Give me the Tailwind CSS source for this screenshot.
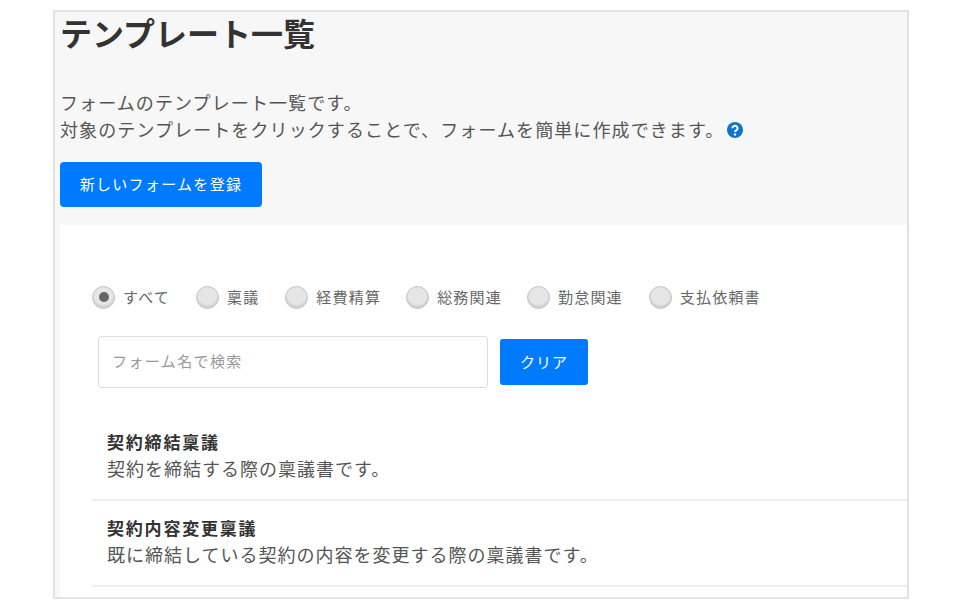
<!DOCTYPE html>
<html lang="ja">

<head>
  <meta charset="utf-8">
  <script src="https://cdn.jsdelivr.net/npm/@tailwindcss/browser@4"></script>
  <title>テンプレート一覧</title>
</head>

<body class="bg-white h-[611px] overflow-hidden font-['Noto_Sans_CJK_JP','Noto_Sans',sans-serif] text-[#555]">
  <div class="ml-[53px] mt-[10px] w-[856px] h-[589px] border-2 border-[#e2e2e2] bg-[#f7f7f7] overflow-hidden pl-[5px]">
    <h1 class="text-[32px] leading-[40px] font-bold text-[#333]">テンプレート一覧</h1>

    <p class="mt-[37px] text-[18px] leading-[27px] tracking-[1.1px]">フォームのテンプレート一覧です。<br>
      <span class="inline-flex items-center">対象のテンプレートをクリックすることで、フォームを簡単に作成できます。
        <svg class="w-[16px] h-[16px] ml-[3px]" viewBox="0 0 16 16">
          <circle cx="8" cy="8" r="8" fill="#0d74cf" />
          <path d="M5.4 6.2a2.6 2.4 0 1 1 4 2c-.9.6-1.4 1-1.4 1.9" fill="none" stroke="#fff" stroke-width="2" />
          <circle cx="8" cy="12.5" r="1.2" fill="#fff" />
        </svg>
      </span>
    </p>

    <button class="mt-[19px] block w-[202px] h-[45px] rounded-[4px] bg-[#007bff] text-white text-[15px] tracking-[1.3px]">新しいフォームを登録</button>

    <div class="mt-[18px] bg-white h-[400px] pl-[32px] pt-[59px]">
      <div class="flex items-center h-[26px] text-[15px] tracking-[1.2px] text-[#666]">
        <label class="flex items-center mr-[26px]">
          <span class="flex items-center justify-center w-[23px] h-[23px] rounded-full bg-[#e6e6e6] border border-[#c4c4c4] shadow-[inset_0_-2px_2px_#ccc] mr-[8px]">
            <span class="w-[10px] h-[10px] rounded-full bg-[#666]"></span>
          </span>すべて
        </label>
        <label class="flex items-center mr-[26px]"><span class="w-[23px] h-[23px] rounded-full bg-[#e6e6e6] border border-[#c4c4c4] shadow-[inset_0_-2px_2px_#ccc] mr-[8px]"></span>稟議</label>
        <label class="flex items-center mr-[25px]"><span class="w-[23px] h-[23px] rounded-full bg-[#e6e6e6] border border-[#c4c4c4] shadow-[inset_0_-2px_2px_#ccc] mr-[8px]"></span>経費精算</label>
        <label class="flex items-center mr-[25px]"><span class="w-[23px] h-[23px] rounded-full bg-[#e6e6e6] border border-[#c4c4c4] shadow-[inset_0_-2px_2px_#ccc] mr-[8px]"></span>総務関連</label>
        <label class="flex items-center mr-[26px]"><span class="w-[23px] h-[23px] rounded-full bg-[#e6e6e6] border border-[#c4c4c4] shadow-[inset_0_-2px_2px_#ccc] mr-[8px]"></span>勤怠関連</label>
        <label class="flex items-center"><span class="w-[23px] h-[23px] rounded-full bg-[#e6e6e6] border border-[#c4c4c4] shadow-[inset_0_-2px_2px_#ccc] mr-[8px]"></span>支払依頼書</label>
      </div>

      <div class="flex items-center mt-[26px] ml-[6px]">
        <input type="text" placeholder="フォーム名で検索"
          class="w-[390px] h-[52px] px-[13px] pb-[3px] rounded-[3px] border border-[#ddd] bg-white text-[15px] tracking-[1.4px] placeholder:text-[#999] outline-none">
        <button class="ml-[12px] w-[88px] h-[46px] rounded-[3px] bg-[#007bff] text-white text-[15px] tracking-[1px]">クリア</button>
      </div>

      <div class="mt-[29px]">
        <div class="h-[84px] pl-[15px] pt-[12px] border-b-2 border-[#eee]">
          <h2 class="text-[17px] leading-[26px] font-bold text-[#333] tracking-[1.8px]">契約締結稟議</h2>
          <p class="text-[18px] leading-[27px] tracking-[1px]">契約を締結する際の稟議書です。</p>
        </div>
        <div class="h-[86px] pl-[15px] pt-[14px] border-b-2 border-[#eee]">
          <h2 class="text-[17px] leading-[26px] font-bold text-[#333] tracking-[1.8px]">契約内容変更稟議</h2>
          <p class="text-[18px] leading-[27px] tracking-[1px]">既に締結している契約の内容を変更する際の稟議書です。</p>
        </div>
      </div>
    </div>
  </div>
</body>

</html>
